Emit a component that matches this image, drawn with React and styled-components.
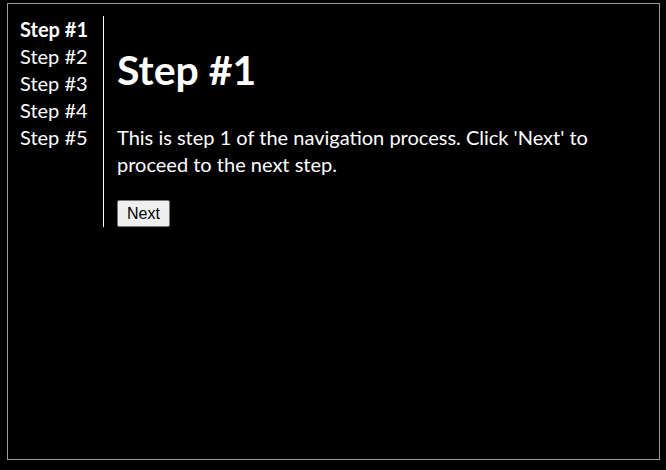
import React, { useState } from "react"
import styled, { createGlobalStyle } from "styled-components"

const GlobalStyle = createGlobalStyle`
  html, body {
    margin: 0;
    padding: 0;
    background: #000;
  }
  body {
    padding: 3px 6px 10px 7px;
  }
`

const Frame = styled.div`
  box-sizing: border-box;
  width: 653px;
  height: 457px;
  border: 1px solid #9a9a9a;
  background: #000;
  color: #fff;
  font-family: Lato, "Open Sans", sans-serif;
  padding-top: 12px;
`

const Layout = styled.div`
  display: flex;
  align-items: stretch;
`

const Sidebar = styled.nav`
  width: 83px;
  padding-left: 12px;
  border-right: 1px solid #fff;
  display: flex;
  flex-direction: column;
`

const StepLink = styled.button`
  background: none;
  border: none;
  padding: 0;
  margin: 0;
  text-align: left;
  color: #fff;
  font-family: inherit;
  font-size: 20px;
  line-height: 27px;
  font-weight: ${props => props.active ? 700 : 400};
  cursor: pointer;
`

const Main = styled.main`
  padding-left: 13px;
  flex: 1;
`

const Title = styled.h1`
  margin: 30px 0 0;
  font-size: 41px;
  line-height: 47px;
  font-weight: 700;
`

const Text = styled.p`
  margin: 31px 0 0;
  max-width: 520px;
  font-size: 20px;
  line-height: 27px;
`

const NextButton = styled.button`
  display: block;
  margin-top: 22px;
  height: 27px;
  padding: 0 9px;
  font-family: "Liberation Sans", Arial, sans-serif;
  font-size: 16px;
  color: #000;
  background: #efefef;
  border: 1px solid #767676;
  border-radius: 2px;
  cursor: pointer;
`

const steps = [1, 2, 3, 4, 5]

const App = () => {
  const [current, setCurrent] = useState(1)

  return (
    <>
      <GlobalStyle />
      <Frame>
        <Layout>
          <Sidebar>
            {steps.map(n => (
              <StepLink key={n} active={n === current} onClick={() => setCurrent(n)}>
                {`Step #${n}`}
              </StepLink>
            ))}
          </Sidebar>
          <Main>
            <Title>{`Step #${current}`}</Title>
            <Text>
              {`This is step ${current} of the navigation process. Click 'Next' to proceed to the next step.`}
            </Text>
            <NextButton onClick={() => setCurrent(current < 5 ? current + 1 : 1)}>Next</NextButton>
          </Main>
        </Layout>
      </Frame>
    </>
  )
}

export default App
